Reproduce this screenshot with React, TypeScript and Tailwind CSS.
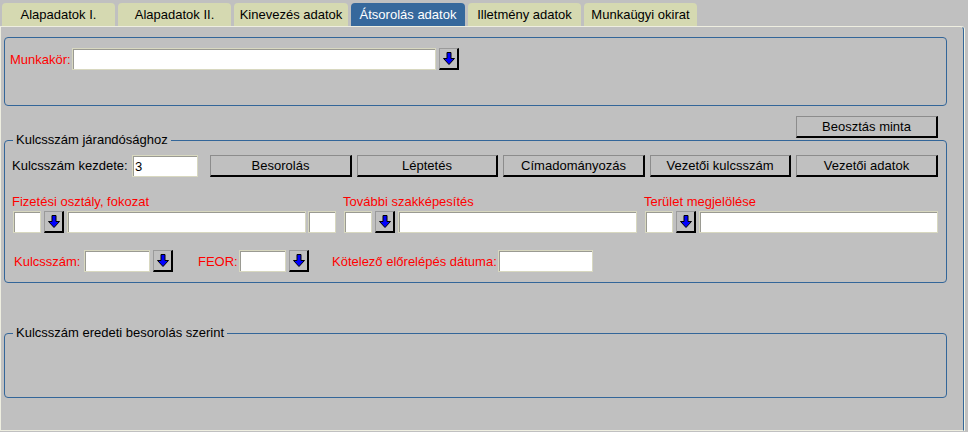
import React from 'react'

const tabs = [
  { label: 'Alapadatok I.', w: 'w-[113px]' },
  { label: 'Alapadatok II.', w: 'w-[113px]' },
  { label: 'Kinevezés adatok', w: 'w-[114px]' },
  { label: 'Átsorolás adatok', w: 'w-[114px]', active: true },
  { label: 'Illetmény adatok', w: 'w-[113px]' },
  { label: 'Munkaügyi okirat', w: 'w-[113px]' },
]

const inputCls =
  'h-[22px] bg-white border border-[#d8d8c0] shadow-[inset_1px_1px_0_#9a9a92] px-[2px] text-[13px] leading-[18px] text-black outline-none'

const btnCls =
  'h-[22px] bg-[#c0c0c0] border-t border-l border-r-2 border-b-2 border-t-[#8c8c8c] border-l-[#8c8c8c] border-r-black border-b-black text-[13px] text-black flex items-center justify-center'

function ArrowButton() {
  return (
    <div className="w-[20px] h-[22px] shrink-0 bg-[#c0c0c0] border-t border-l border-r-2 border-b-2 border-t-[#9a9a9a] border-l-[#9a9a9a] border-r-black border-b-black flex items-center justify-center">
      <svg width="14" height="15" viewBox="0 0 14 15">
        <path
          d="M5 1.5 H9 V7.5 H12.5 L7 13.5 L1.5 7.5 H5 Z"
          fill="#0000ff"
          stroke="#000"
          strokeWidth="1"
          strokeLinejoin="miter"
        />
      </svg>
    </div>
  )
}

function Box({ legend, className, children }: { legend?: string; className: string; children?: React.ReactNode }) {
  return (
    <div className={`relative ml-[3px] w-[943px] border border-[#336699] rounded-[4px] ${className}`}>
      {legend && (
        <span className="absolute left-[8px] -top-[9px] bg-[#c0c0c0] px-[3px] text-[13px] leading-[16px] text-black">
          {legend}
        </span>
      )}
      {children}
    </div>
  )
}

function Red({ children, className = '' }: { children: React.ReactNode; className?: string }) {
  return <span className={`text-[13px] leading-[15px] text-[#ff0000] ${className}`}>{children}</span>
}

function TripleGroup({ label, withTail, className }: { label: string; withTail?: boolean; className: string }) {
  return (
    <div className={`flex flex-col shrink-0 ${className}`}>
      <Red>{label}</Red>
      <div className="mt-[2px] ml-[1px] flex items-center">
        <input className={`${inputCls} w-[28px]`} />
        <div className="ml-[3px]">
          <ArrowButton />
        </div>
        <input className={`${inputCls} ml-[3px] w-[239px]`} />
        {withTail && <input className={`${inputCls} ml-[2px] w-[28px]`} />}
      </div>
    </div>
  )
}

export default function App() {
  return (
    <div
      className="w-[968px] h-[432px] bg-[#c0c0c0] overflow-hidden flex flex-col"
      style={{ fontFamily: '"Liberation Sans", Arial, sans-serif' }}
    >
      {/* tab strip */}
      <div className="h-[26px] flex items-end gap-[3px] pl-[2px]">
        {tabs.map((t) => (
          <div
            key={t.label}
            className={`${t.w} h-[23px] rounded-t-[4px] flex items-center justify-center text-[13px] ${
              t.active ? 'bg-[#36689c] text-white' : 'bg-[#d5d9b1] text-black'
            }`}
          >
            {t.label}
          </div>
        ))}
      </div>

      {/* page */}
      <div className="w-[964px] h-[405px] border border-[#eeeee0] border-r-[#336699] rounded-tr-[4px] shadow-[1px_0_0_#f4f4e4]">
        <Box className="mt-[10px] h-[69px] pt-[10px] pl-[5px]">
          <div className="flex items-center">
            <Red className="w-[62px]">Munkakör:</Red>
            <input className={`${inputCls} w-[364px]`} />
            <div className="ml-[3px]">
              <ArrowButton />
            </div>
          </div>
        </Box>

        <div className="mt-[10px] ml-[795px]">
          <div className={`${btnCls} w-[142px]`}>Beosztás minta</div>
        </div>

        <Box legend="Kulcsszám járandósághoz" className="mt-[2px] h-[143px] pt-[14px]">
          <div className="flex items-center pl-[7px]">
            <span className="w-[120px] text-[13px] text-black">Kulcsszám kezdete:</span>
            <input className={`${inputCls} w-[66px]`} defaultValue="3" />
            <div className="ml-[12px] flex gap-[5px]">
              <div className={`${btnCls} w-[142px]`}>Besorolás</div>
              <div className={`${btnCls} w-[141px]`}>Léptetés</div>
              <div className={`${btnCls} w-[142px]`}>Címadományozás</div>
              <div className={`${btnCls} w-[141px]`}>Vezetői kulcsszám</div>
              <div className={`${btnCls} w-[142px]`}>Vezetői adatok</div>
            </div>
          </div>

          <div className="mt-[17px] pl-[7px] flex">
            <TripleGroup label="Fizetési osztály, fokozat" withTail className="w-[331px]" />
            <TripleGroup label="További szakképesítés" className="w-[300px]" />
            <TripleGroup label="Terület megjelölése" className="w-[300px] pl-[1px]" />
          </div>

          <div className="mt-[17px] pl-[9px] flex items-center">
            <Red className="w-[70px]">Kulcsszám:</Red>
            <input className={`${inputCls} w-[66px]`} />
            <div className="ml-[3px]">
              <ArrowButton />
            </div>
            <Red className="ml-[25px] w-[41px]">FEOR:</Red>
            <input className={`${inputCls} w-[47px]`} />
            <div className="ml-[3px]">
              <ArrowButton />
            </div>
            <Red className="ml-[23px] w-[166px]">Kötelező előrelépés dátuma:</Red>
            <input className={`${inputCls} w-[95px]`} />
          </div>
        </Box>

        <Box legend="Kulcsszám eredeti besorolás szerint" className="mt-[50px] h-[65px]" />
      </div>
    </div>
  )
}
